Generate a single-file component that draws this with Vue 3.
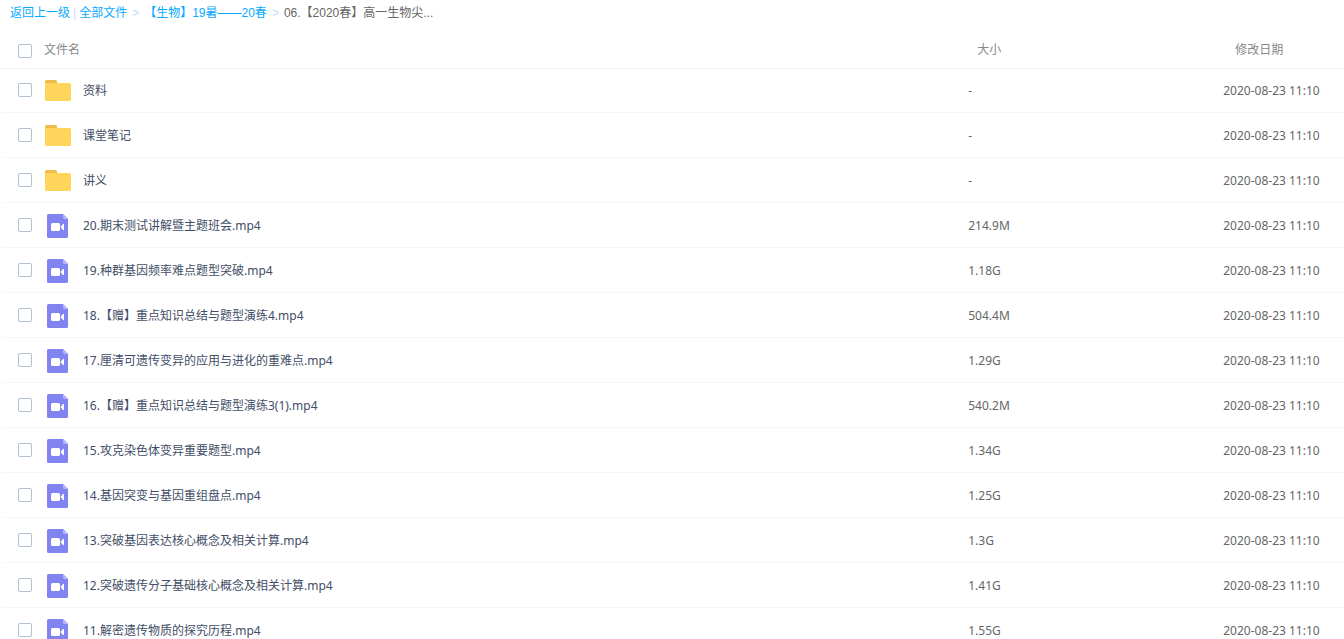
<script setup>
import { computed, ref } from 'vue'

const date = '2020-08-23 11:10'
const files = [
  { type: 'folder', name: '资料', size: '-' },
  { type: 'folder', name: '课堂笔记', size: '-' },
  { type: 'folder', name: '讲义', size: '-' },
  { type: 'video', name: '20.期末测试讲解暨主题班会.mp4', size: '214.9M' },
  { type: 'video', name: '19.种群基因频率难点题型突破.mp4', size: '1.18G' },
  { type: 'video', name: '18.【赠】重点知识总结与题型演练4.mp4', size: '504.4M' },
  { type: 'video', name: '17.厘清可遗传变异的应用与进化的重难点.mp4', size: '1.29G' },
  { type: 'video', name: '16.【赠】重点知识总结与题型演练3(1).mp4', size: '540.2M' },
  { type: 'video', name: '15.攻克染色体变异重要题型.mp4', size: '1.34G' },
  { type: 'video', name: '14.基因突变与基因重组盘点.mp4', size: '1.25G' },
  { type: 'video', name: '13.突破基因表达核心概念及相关计算.mp4', size: '1.3G' },
  { type: 'video', name: '12.突破遗传分子基础核心概念及相关计算.mp4', size: '1.41G' },
  { type: 'video', name: '11.解密遗传物质的探究历程.mp4', size: '1.55G' },
]

const selected = ref([])
const allSelected = computed({
  get: () => selected.value.length === files.length,
  set: (on) => {
    selected.value = on ? files.map((f) => f.name) : []
  },
})
</script>

<template>
  <div class="page">
    <nav class="crumbs">
      <a href="#">返回上一级</a>
      <span class="bar">|</span>
      <a href="#">全部文件</a>
      <span class="sep">&gt;</span>
      <a href="#">【生物】19暑——20春</a>
      <span class="sep">&gt;</span>
      <span class="current">06.【2020春】高一生物尖...</span>
    </nav>

    <table class="list">
      <thead>
        <tr>
          <th class="col-name">
            <div class="cell head">
              <input id="check-all" v-model="allSelected" type="checkbox" />
              <label for="check-all">文件名</label>
            </div>
          </th>
          <th class="col-size">大小</th>
          <th class="col-date">修改日期</th>
        </tr>
      </thead>
      <tbody>
        <tr v-for="(f, i) in files" :key="f.name">
          <td>
            <div class="cell">
              <input :id="'file-' + i" v-model="selected" type="checkbox" :value="f.name" />
              <svg v-if="f.type === 'folder'" class="icon" viewBox="0 0 26 26" aria-hidden="true">
                <path d="M0 8V4.500Q0 3 1.500 3H10.500Q12 3 12 4.500V8Z" fill="#ecbd48" />
                <path d="M0 6H24.500Q26 6 26 7.500V22.500Q26 24 24.500 24H1.500Q0 24 0 22.500Z" fill="#ffd65b" />
              </svg>
              <svg v-else class="icon" viewBox="0 0 26 26" aria-hidden="true">
                <path d="M3.500 2H18L23 7V24.500Q23 26 21.500 26H3.500Q2 26 2 24.500V3.500Q2 2 3.500 2Z" fill="#8183f1" />
                <path d="M18 2L23 7H19.500Q18 7 18 5.500Z" fill="#b4b5f8" />
                <rect x="6" y="11" width="9" height="8" rx="1.500" fill="#fff" />
                <path d="M15.500 15L17.500 12.500Q19 11 19 12.500V17.500Q19 19 17.500 17.500Z" fill="#fff" />
              </svg>
              <label :for="'file-' + i">{{ f.name }}</label>
            </div>
          </td>
          <td class="meta">{{ f.size }}</td>
          <td class="meta">{{ date }}</td>
        </tr>
      </tbody>
    </table>
  </div>
</template>

<style>
body {
  background: #fff;
}
</style>

<style scoped>
.page {
  height: 100vh;
  overflow: hidden;
  font: 12px/18px "Noto Sans", "Noto Sans CJK SC", sans-serif;
  text-spacing-trim: space-all;
  color: #666;
}

.crumbs {
  display: flex;
  box-sizing: border-box;
  height: 24px;
  align-items: center;
  padding: 2px 0 0 10px;
  font-family: "Liberation Sans", "Noto Sans CJK SC", sans-serif;
  white-space: nowrap;
}

.crumbs a {
  color: #09aaff;
  text-decoration: none;
}

.bar,
.sep {
  color: #c4dbfe;
}

.bar {
  margin: 0 3px;
}

.sep {
  margin: 0 5px;
}

.current {
  color: #666;
}

.list {
  width: calc(100% - 2px);
  margin: 8px 0 0 2px;
  border-spacing: 0;
  table-layout: fixed;
}

th {
  height: 36px;
  padding: 0;
  font-weight: 400;
  color: #888;
  text-align: left;
}

.col-name {
  width: 72%;
}

.col-size {
  width: 19%;
  padding-left: 9px;
}

.col-date {
  width: 9%;
  padding-left: 12px;
}

th,
td {
  box-sizing: border-box;
  white-space: nowrap;
}

td {
  height: 45px;
  padding: 0;
  border-bottom: 1px solid #f2f6fd;
}

tbody tr:first-child td {
  box-shadow: inset 0 1px #f2f2f2;
}

.cell {
  display: flex;
  align-items: center;
  padding-left: 16px;
}

td .cell {
  color: #424e67;
}

.meta,
td label {
  padding-top: 2px;
}

.head {
  gap: 12px;
}

input {
  appearance: none;
  box-sizing: border-box;
  flex: none;
  width: 14px;
  height: 14px;
  margin: 0;
  border: 1px solid #b3c0cf;
  border-radius: 2px;
  background: #fff;
}

.head input {
  margin-top: 2px;
}

input:checked {
  border-color: #09aaff;
  background: #09aaff;
}

.icon {
  flex: none;
  width: 26px;
  height: 26px;
  margin: 0 12px 0 13px;
}
</style>
